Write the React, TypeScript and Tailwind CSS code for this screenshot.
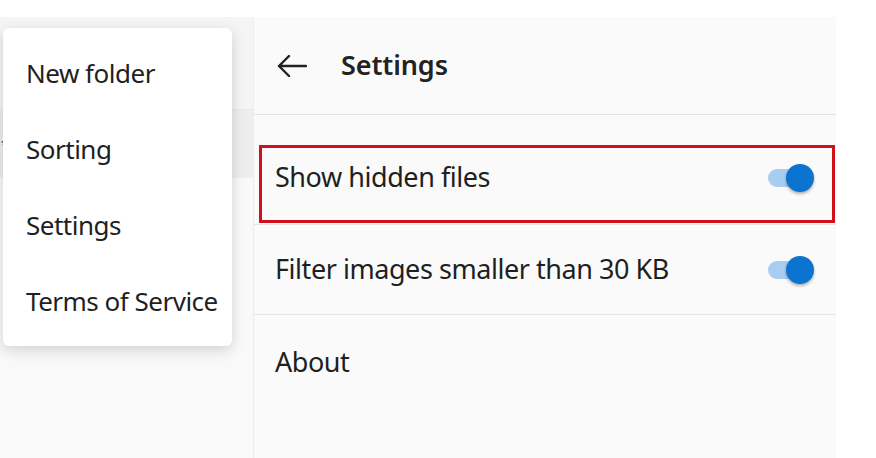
import React from "react";

function Toggle() {
  return (
    <div className="relative h-[28px] w-[46px]">
      <div className="absolute left-0 top-[5px] h-[18px] w-[40px] rounded-full bg-[#a9cdf0]" />
      <div className="absolute right-0 top-0 h-[28px] w-[28px] rounded-full bg-[#0b74d1] shadow-[0_2px_3px_rgba(0,0,0,0.3)]" />
    </div>
  );
}

const menuItems = ["New folder", "Sorting", "Settings", "Terms of Service"];

export default function App() {
  return (
    <div
      className="relative flex h-[458px] w-[876px] flex-col overflow-hidden bg-white pt-[17px] text-[#1f1f1f]"
      style={{ fontFamily: '"Noto Sans", "Open Sans", sans-serif' }}
    >
      <div className="flex flex-1">
        {/* left pane behind the menu */}
        <div className="flex w-[253px] flex-col bg-[#f5f5f5]">
          <div className="h-[93px] border-b border-[#e8e8e8]" />
          <div className="flex h-[68px] items-center bg-[#eeeeee] pl-[1px] text-[14px] text-[#333]">
            *
          </div>
          <div className="flex-1 bg-[#f9f9f9]" />
        </div>

        {/* settings pane */}
        <div className="flex w-[583px] flex-col border-l border-[#ececec] bg-[#fafafa]">
          <div className="flex h-[98px] items-center gap-[34px] border-b border-[#e2e2e2] pl-[23px]">
            <svg width="30" height="22" viewBox="0 0 30 22" fill="none">
              <path
                d="M29 11H2M12 1L2 11l10 10"
                stroke="#222"
                strokeWidth="2.4"
                strokeLinecap="round"
                strokeLinejoin="round"
              />
            </svg>
            <span className="text-[27px] font-semibold tracking-[-0.1px] text-[#222]">Settings</span>
          </div>

          <div className="pt-[16px]">
            <div className="flex h-[94px] items-center justify-between border-b border-[#e6e6e6] pl-[21px] pr-[22px]">
              <span className="text-[27px] tracking-[-0.45px]">Show hidden files</span>
              <Toggle />
            </div>
            <div className="flex h-[90px] items-center justify-between border-b border-[#e6e6e6] pl-[21px] pr-[22px]">
              <span className="text-[27px] tracking-[-0.45px]">Filter images smaller than 30 KB</span>
              <Toggle />
            </div>
            <div className="flex h-[94px] items-center pl-[21px]">
              <span className="text-[27px] tracking-[-0.45px]">About</span>
            </div>
          </div>
        </div>
      </div>

      {/* highlight annotation */}
      <div className="pointer-events-none absolute left-[259px] top-[145px] h-[78px] w-[576px] border-[3px] border-[#d0101a]" />

      {/* overflow menu */}
      <div className="absolute left-[3px] top-[28px] flex w-[229px] flex-col rounded-[6px] bg-white py-[7px] shadow-[0_4px_14px_rgba(0,0,0,0.16)]">
        {menuItems.map((item) => (
          <div key={item} className="flex h-[76px] items-center pl-[23px] text-[26px] tracking-[-0.5px]">
            {item}
          </div>
        ))}
      </div>
    </div>
  );
}
